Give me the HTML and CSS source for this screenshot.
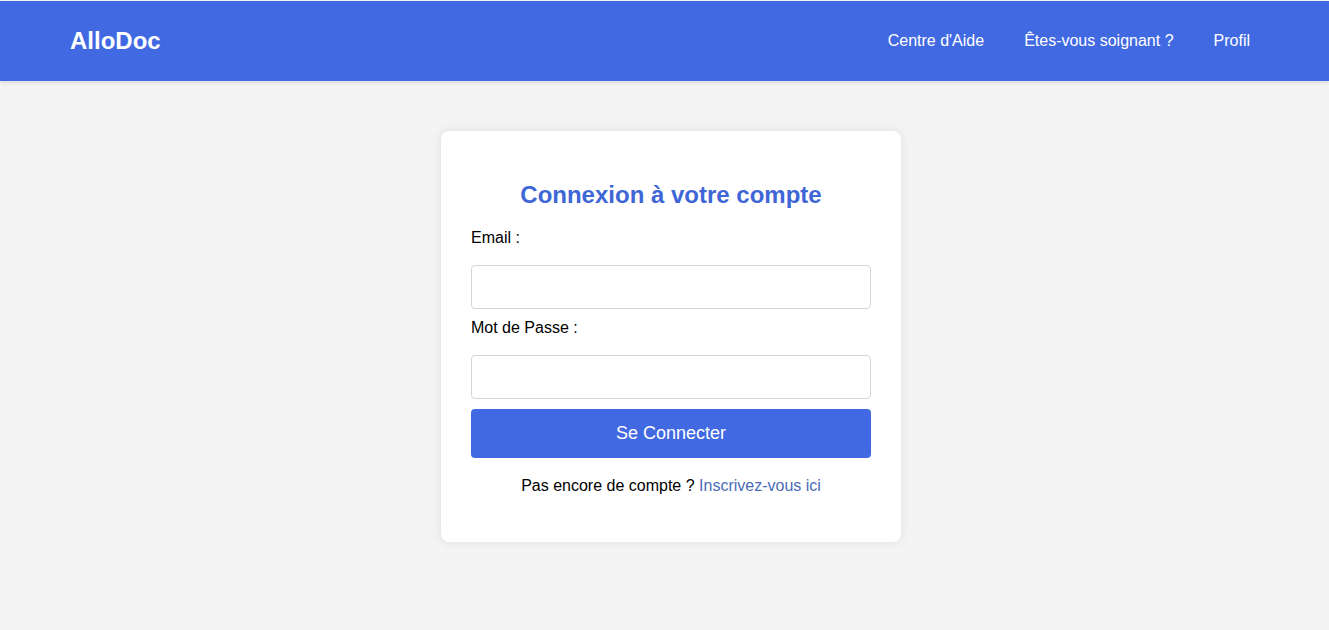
FILE: index.html
```html
<!DOCTYPE html>
<html lang="fr">
<head>
<meta charset="utf-8">
<title>AlloDoc - Connexion</title>
<link rel="stylesheet" href="styles.css">
</head>
<body>
<header class="topbar">
  <div class="logo">AlloDoc</div>
  <nav class="nav">
    <a href="#">Centre d'Aide</a>
    <a href="#">Êtes-vous soignant ?</a>
    <a href="#">Profil</a>
  </nav>
</header>
<main class="page">
  <section class="card">
    <h2 class="title">Connexion à votre compte</h2>
    <form class="form">
      <label class="label" for="email">Email :</label>
      <input class="field" id="email" type="email">
      <label class="label" for="pwd">Mot de Passe :</label>
      <input class="field" id="pwd" type="password">
      <button class="btn" type="button">Se Connecter</button>
    </form>
    <p class="signup">Pas encore de compte ? <a href="#">Inscrivez-vous ici</a></p>
  </section>
</main>
</body>
</html>
```

FILE: styles.css
```css
* { box-sizing: border-box; }
html, body { margin: 0; padding: 0; }
body {
  font-family: "Liberation Sans", Arial, sans-serif;
  background: #f4f4f4;
  color: #000;
  min-height: 630px;
}
.topbar {
  height: 80px;
  margin-top: 1px;
  background: #4169e1;
  display: flex;
  align-items: center;
  justify-content: space-between;
  padding: 0 79px 0 70px;
  box-shadow: 0 2px 4px rgba(0,0,0,0.1);
}
.logo {
  color: #fff;
  font-size: 24px;
  font-weight: bold;
}
.nav {
  display: flex;
  gap: 40px;
}
.nav a {
  color: #fff;
  text-decoration: none;
  font-size: 16px;
}
.page {
  display: flex;
  justify-content: center;
  padding: 50px 0 0 13px;
}
.card {
  width: 460px;
  background: #fff;
  border-radius: 8px;
  padding: 30px;
  box-shadow: 0 0 10px rgba(0,0,0,0.1);
}
.title {
  margin: 20px 0 20px;
  text-align: center;
  color: #3f66d6;
  font-size: 24px;
  line-height: 28px;
}
.form {
  display: flex;
  flex-direction: column;
}
.label {
  font-size: 16px;
  line-height: 18px;
  margin-bottom: 18px;
}
.field {
  height: 44px;
  border: 1px solid #d6d6d6;
  border-radius: 4px;
  margin-bottom: 10px;
  font-size: 16px;
  padding: 10px;
}
.btn {
  height: 49px;
  border: none;
  border-radius: 4px;
  background: #4169e1;
  color: #fff;
  font-family: inherit;
  font-size: 18px;
}
.signup {
  text-align: center;
  font-size: 16px;
  line-height: 18px;
  margin: 19px 0 17px;
}
.signup a {
  color: #4a6cb8;
  text-decoration: none;
}
```
